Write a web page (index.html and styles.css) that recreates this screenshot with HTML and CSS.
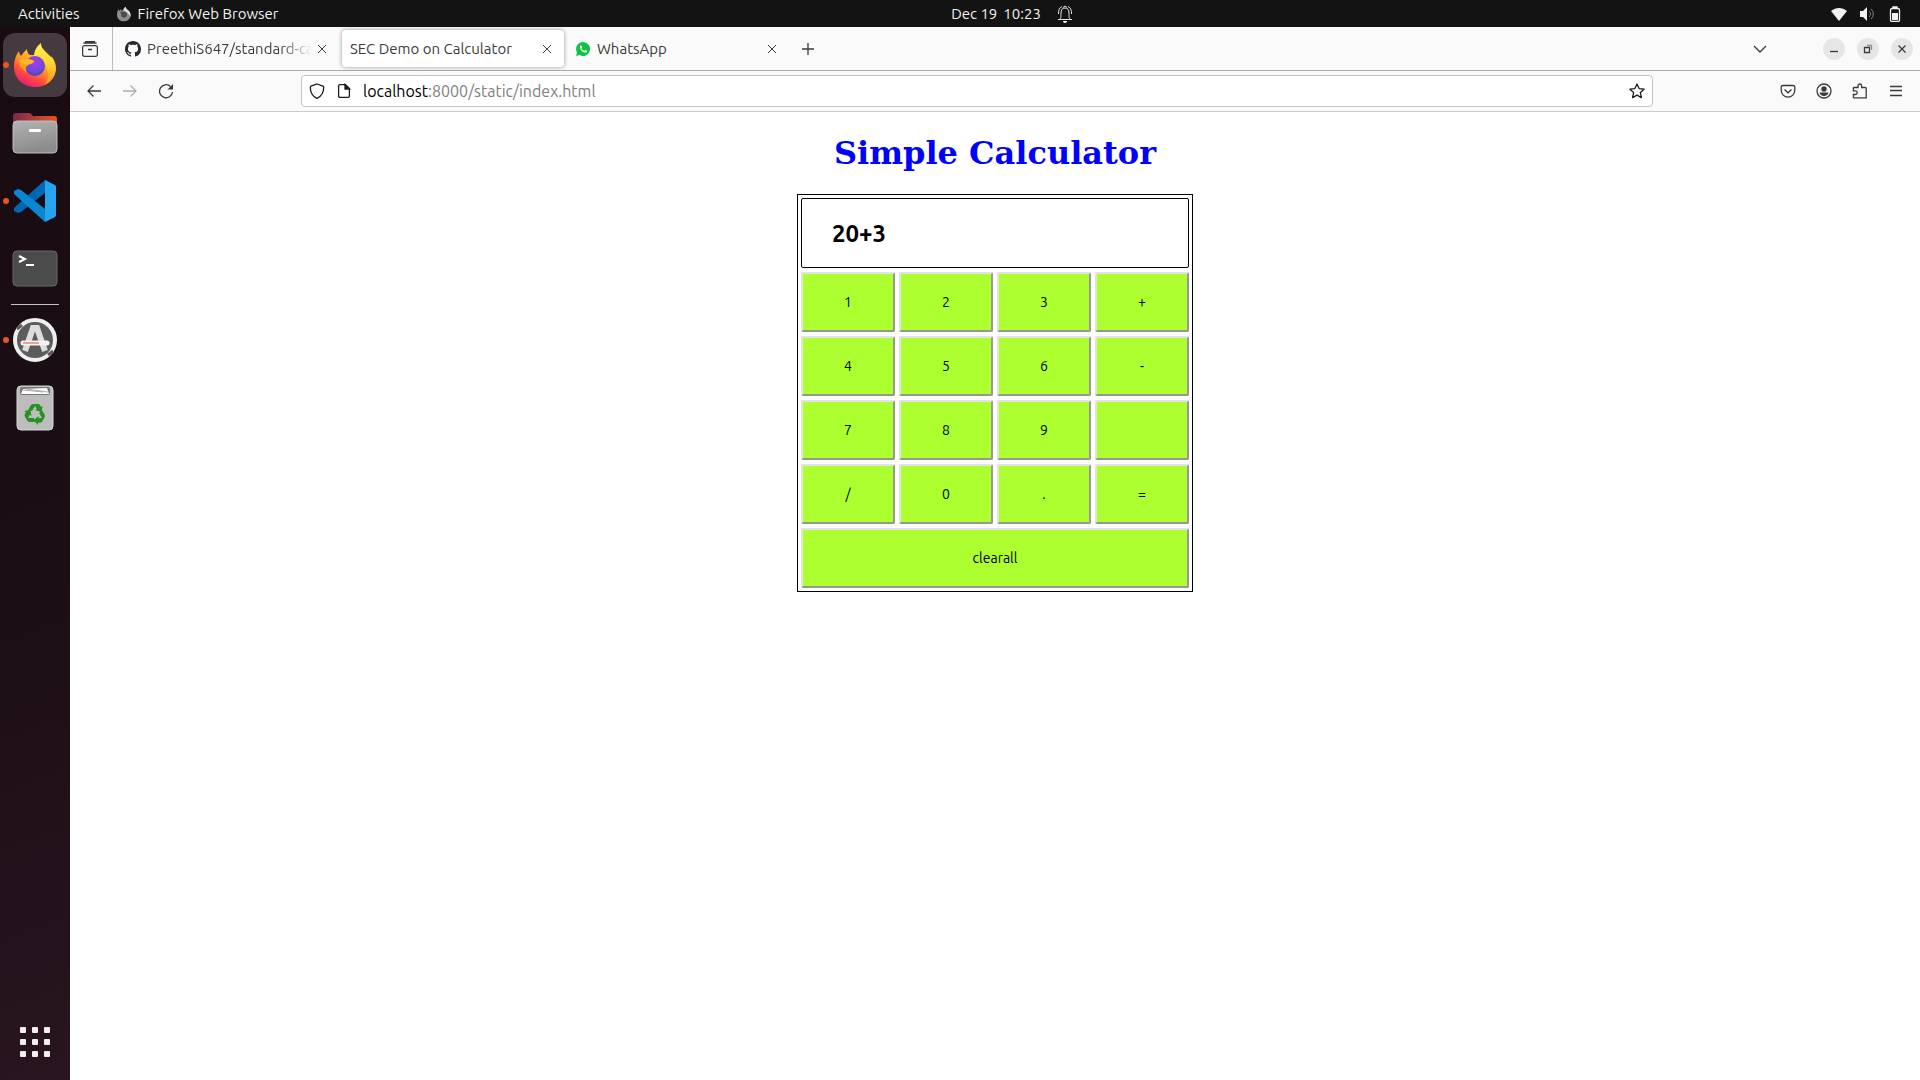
FILE: index.html
```html
<!DOCTYPE html>
<html lang="en">
<head>
<meta charset="utf-8">
<title>SEC Demo on Calculator</title>
<meta name="viewport" content="width=device-width, initial-scale=1">
<link rel="stylesheet" href="styles.css">
</head>
<body>
<div class="desktop">
  <header class="topbar">
    <div class="topbar-left">
      <button class="plain" type="button">Activities</button>
      <button class="plain app-menu" type="button">
        <svg width="16" height="16" viewBox="0 0 48 48" aria-hidden="true">
          <path d="M8 9c0 3 1 4 2 6l5-6c0 3 1 5 3 7C20 9 26 4 28 2c2 5 4 7 10 12 5 5 7 12 5 19-3 8-10 13-19 13C11 46 3 38 3 26c0-7 2-12 5-17z" fill="#8d8d8d"/>
          <path d="M28 2c2 5 4 7 10 12 5 5 7 12 5 19-4-9-10-16-20-20 1-5 3-8 5-11z" fill="#e2e2e2"/>
          <path d="M12 19c7-2 14-3 20 2 3 7-1 14-8 14-6 0-10-5-8-11z" fill="#4b4b4b"/>
        </svg>
        <span>Firefox Web Browser</span>
      </button>
    </div>
    <button class="plain clock" type="button">
      <span>Dec 19</span><span>10:23</span>
      <svg class="bell" width="16" height="18" viewBox="0 0 16 18" fill="none" stroke="#e6e6e6" aria-hidden="true">
        <path d="M3 14c1-1 1-2 1-6 0-3 1-5 4-5s4 2 4 5c0 4 0 5 1 6M1 14.500h14M1.500 9C1.500 5 2 3 5 1.500M14.500 9C14.500 5 14 3 11 1.500M6 2.500l2-1.500 2 1.500"/>
        <path d="M6 16h4c0 1-1 2-2 2s-2-1-2-2z" fill="#fff" stroke="none"/>
      </svg>
    </button>
    <div class="tray">
      <svg width="16" height="16" viewBox="0 0 16 16" aria-label="Wi-Fi"><path d="M0 5c5-4 11-4 16 0L8 15z" fill="#f2f2f2"/></svg>
      <svg width="16" height="16" viewBox="0 0 16 16" aria-label="Volume"><path d="M1 5h3l4-4v14l-4-4H1z" fill="#f2f2f2"/><path d="M10 5c2 2 2 4 0 6M12 3c3 3 3 7 0 10" fill="none" stroke="#888"/></svg>
      <svg width="16" height="16" viewBox="0 0 16 16" aria-label="Battery"><path d="M6 2V1h4v1M5 2.500h6q1.500 0 1.500 1.500v10q0 1.500-1.500 1.500H5q-1.500 0-1.500-1.500V4q0-1.500 1.500-1.500z" fill="none" stroke="#f2f2f2" stroke-width="1.300"/><path d="M5 7h6v7H5z" fill="#f2f2f2"/></svg>
    </div>
  </header>

  <nav class="dock" aria-label="Applications">
    <button class="dock-item active running" type="button" aria-label="Firefox">
      <svg width="44" height="46" viewBox="0 0 44 46" aria-hidden="true">
        <defs>
          <linearGradient id="fx1" x1="0.800" y1="0.100" x2="0.250" y2="1"><stop offset="0" stop-color="#ffe23c"/><stop offset="0.400" stop-color="#ffa01e"/><stop offset="0.700" stop-color="#ff4a3d"/><stop offset="1" stop-color="#e6138a"/></linearGradient>
          <linearGradient id="fx2" x1="0" y1="0" x2="0" y2="1"><stop offset="0" stop-color="#fff34f"/><stop offset="0.500" stop-color="#ffd433"/><stop offset="1" stop-color="#ff8a1c"/></linearGradient>
          <radialGradient id="fx3" cx="0.500" cy="0.300" r="0.800"><stop offset="0" stop-color="#a33cf0"/><stop offset="0.600" stop-color="#6a4bdc"/><stop offset="1" stop-color="#4a35b0"/></radialGradient>
        </defs>
        <path d="M6 9c0 2 1 4 2 5 2-3 4-5 6-7 0 3 1 5 3 6h12l10 2c3 4 4 8 4 11 0 11-9 19-21 19S1 36 1 25c0-7 2-12 5-16z" fill="url(#fx1)"/>
        <path d="M28 1c0 5 3 7 8 12 7 7 9 16 3 24-2 3-5 5-8 6 4-4 5-10 3-17-2-6-6-10-13-12 0-5 3-10 7-13z" fill="url(#fx2)"/>
        <circle cx="22" cy="24" r="10" fill="url(#fx3)"/>
        <path d="M6 18c5-1 10-2 15 1 0 3-5 3-7 5-2 1-1 5 0 7-4-3-8-7-8-13z" fill="#ff9a20"/>
        <path d="M6 18c5-1 10-2 15 1 0 3-4 2-7 4-3-1-6-2-8-5z" fill="#ffb629"/>
      </svg>
    </button>
    <button class="dock-item" type="button" aria-label="Files">
      <svg width="46" height="42" viewBox="0 0 46 42" aria-hidden="true">
        <defs>
          <linearGradient id="fo1"><stop offset="0" stop-color="#77284f"/><stop offset="1" stop-color="#e95420"/></linearGradient>
          <linearGradient id="fo2" x1="0" y1="0" x2="0.300" y2="1"><stop offset="0" stop-color="#b3b3b3"/><stop offset="1" stop-color="#8b8b8b"/></linearGradient>
        </defs>
        <path d="M1 12V4q0-3 3-3h13q2 0 3 2t3 1h19q3 0 3 3v8H1z" fill="url(#fo1)"/>
        <rect x="1" y="9" width="44" height="32" rx="4" fill="url(#fo2)" stroke="#bdbdbd"/>
        <rect x="17" y="17" width="12" height="3" rx="1" fill="#fff"/>
      </svg>
    </button>
    <button class="dock-item running" type="button" aria-label="Visual Studio Code">
      <svg width="44" height="44" viewBox="0 0 44 44" aria-hidden="true">
        <path d="M32 1L1 29v3l4 2 3-1 24-19z" fill="#0067b4"/>
        <path d="M32 43L1 15v-3l4-2 3 1 24 19z" fill="#0b86d2"/>
        <path d="M32 1l10 5q1 1 1 2v28q0 1-1 2l-10 5V1z" fill="#28a4ef"/>
      </svg>
    </button>
    <button class="dock-item" type="button" aria-label="Terminal">
      <svg width="46" height="38" viewBox="0 0 46 38" fill="none" aria-hidden="true">
        <rect x="1" y="1" width="44" height="35" rx="4" fill="#4b4b4b" stroke="#686868"/>
        <path d="M7 6l6 3-6 3" stroke="#fff" stroke-width="2"/><path d="M14 15h8" stroke="#fff" stroke-width="2"/>
      </svg>
    </button>
    <hr class="dock-rule">
    <button class="dock-item running" type="button" aria-label="Software Updater">
      <svg width="46" height="46" viewBox="0 0 46 46" fill="none" aria-hidden="true">
        <circle cx="23" cy="23" r="20" fill="#5c5c5c" stroke="#efefef" stroke-width="4"/>
        <path d="M5 12l5-4M36 38l5-4" stroke="#5c5c5c" stroke-width="3"/>
        <path d="M13 34l8-23h4l8 23" stroke="#dedede" stroke-width="6"/>
        <path d="M11 26h24" stroke="#f3f3f3" stroke-width="5" stroke-linecap="round"/>
        <path d="M11 26h16" stroke="#e95420"/>
      </svg>
    </button>
    <button class="dock-item" type="button" aria-label="Trash">
      <svg width="38" height="46" viewBox="0 0 38 46" fill="none" aria-hidden="true">
        <rect x="1" y="1" width="36" height="44" rx="4" fill="#bdbdbd" stroke="#d6d6d6"/>
        <rect x="4" y="2" width="30" height="8" rx="2" fill="#777"/>
        <path d="M5 9l2-5 24-1 2 6z" fill="#fff"/><path d="M7 5l20 2M10 4l22 3" stroke="#aaa"/>
        <g id="arrow" fill="#26921f"><path d="M12 25l3-5q1-1 2-1h5q1 0 2 1l1 2 2-1-2 6-6-2 2-1-2-3-3 5z"/></g>
        <g fill="#26921f" transform="rotate(120 19 29)"><path d="M12 25l3-5q1-1 2-1h5q1 0 2 1l1 2 2-1-2 6-6-2 2-1-2-3-3 5z"/></g>
        <g fill="#26921f" transform="rotate(240 19 29)"><path d="M12 25l3-5q1-1 2-1h5q1 0 2 1l1 2 2-1-2 6-6-2 2-1-2-3-3 5z"/></g>
      </svg>
    </button>
    <button class="dock-item apps" type="button" aria-label="Show Applications">
      <svg width="30" height="30" viewBox="0 0 30 30" fill="#f2f0ee" aria-hidden="true">
        <rect width="6" height="6" rx="1"/><rect x="12" width="6" height="6" rx="1"/><rect x="24" width="6" height="6" rx="1"/>
        <rect y="12" width="6" height="6" rx="1"/><rect x="12" y="12" width="6" height="6" rx="1"/><rect x="24" y="12" width="6" height="6" rx="1"/>
        <rect y="24" width="6" height="6" rx="1"/><rect x="12" y="24" width="6" height="6" rx="1"/><rect x="24" y="24" width="6" height="6" rx="1"/>
      </svg>
    </button>
  </nav>

  <div class="browser">
    <div class="tabstrip">
      <button class="icon-btn view-btn" type="button" aria-label="Firefox View">
        <svg width="16" height="16" viewBox="0 0 16 16"><rect x="0.600" y="4.600" width="14.800" height="10.800" rx="2"/><path d="M1.500 2.500q0-.5 1-.5h11q1 0 1 .5M3 .5h10M6 8.500h4"/></svg>
      </button>
      <div class="tabs">
        <div class="tab">
          <svg class="favicon" width="16" height="16" viewBox="0 0 16 16" aria-hidden="true"><path fill="#24292f" d="M8 0C3.580 0 0 3.580 0 8c0 3.540 2.290 6.530 5.470 7.590.4.070.55-.17.55-.38 0-.19-.01-.82-.01-1.490-2.010.37-2.530-.49-2.690-.94-.09-.23-.48-.94-.82-1.130-.28-.15-.68-.52-.01-.53.63-.01 1.080.58 1.230.82.72 1.210 1.870.87 2.330.66.070-.52.28-.87.51-1.070-1.780-.2-3.640-.89-3.640-3.950 0-.87.31-1.590.82-2.150-.08-.2-.36-1.020.08-2.120 0 0 .67-.21 2.200.82.64-.18 1.320-.27 2-.27s1.360.09 2 .27c1.530-1.040 2.200-.82 2.200-.82.44 1.100.16 1.920.08 2.120.51.56.82 1.270.82 2.150 0 3.070-1.870 3.750-3.650 3.950.29.25.54.73.54 1.480 0 1.070-.01 1.930-.01 2.200 0 .21.15.46.55.38A8.010 8.010 0 0 0 16 8c0-4.420-3.580-8-8-8z"/></svg>
          <span class="tab-title fade">PreethiS647/standard-cal</span>
          <button class="icon-btn tab-close" type="button" aria-label="Close tab"><svg width="10" height="10" viewBox="0 0 10 10"><path d="M1 1l8 8M9 1l-8 8"/></svg></button>
        </div>
        <div class="tab selected">
          <span class="tab-title">SEC Demo on Calculator</span>
          <button class="icon-btn tab-close" type="button" aria-label="Close tab"><svg width="10" height="10" viewBox="0 0 10 10"><path d="M1 1l8 8M9 1l-8 8"/></svg></button>
        </div>
        <div class="tab">
          <svg class="favicon" width="16" height="16" viewBox="0 0 16 16" aria-hidden="true"><path d="M8 1a7 7 0 1 1-3.500 13L1 15l1-3.500A7 7 0 0 1 8 1z" fill="#12c244"/><path d="M5.500 4.500c-2 1.500 1.500 7.500 5.500 7 1 0 1.500-1 1.200-1.800L10.300 9l-1 1C8 9.500 7 8.500 6.300 7.200l.8-.9-.7-1.800z" fill="#fff"/></svg>
          <span class="tab-title">WhatsApp</span>
          <button class="icon-btn tab-close" type="button" aria-label="Close tab"><svg width="10" height="10" viewBox="0 0 10 10"><path d="M1 1l8 8M9 1l-8 8"/></svg></button>
        </div>
        <button class="icon-btn new-tab" type="button" aria-label="New tab"><svg width="12" height="12" viewBox="0 0 12 12"><path d="M6 0v12M0 6h12"/></svg></button>
      </div>
      <button class="icon-btn list-tabs" type="button" aria-label="List all tabs"><svg width="14" height="8" viewBox="0 0 14 8"><path d="M1 1l6 6 6-6"/></svg></button>
      <div class="window-controls">
        <button class="win-btn" type="button" aria-label="Minimize"><svg width="10" height="10" viewBox="0 0 10 10"><path d="M1 7.500h8"/></svg></button>
        <button class="win-btn" type="button" aria-label="Restore"><svg width="10" height="10" viewBox="0 0 10 10"><path d="M1.500 3.500h5v5h-5z"/><path d="M4 1.500h4.500V6" opacity="0.500"/></svg></button>
        <button class="win-btn" type="button" aria-label="Close"><svg width="10" height="10" viewBox="0 0 10 10"><path d="M1.500 1.500l7 7M8.500 1.500l-7 7"/></svg></button>
      </div>
    </div>

    <div class="navbar">
      <button class="icon-btn nav-btn" type="button" aria-label="Back"><svg width="16" height="16" viewBox="0 0 16 16"><path d="M15 8H2M7.500 2.500L2 8l5.500 5.500"/></svg></button>
      <button class="icon-btn nav-btn" type="button" aria-label="Forward" disabled><svg width="16" height="16" viewBox="0 0 16 16"><path d="M1 8h13M8.500 2.500L14 8l-5.500 5.500"/></svg></button>
      <button class="icon-btn nav-btn" type="button" aria-label="Reload"><svg width="16" height="16" viewBox="0 0 16 16"><path d="M14.500 9A6.500 6.500 0 1 1 12.500 3.500"/><path d="M15 1v5.500H9.500z" fill="#3b3b3d" stroke="none"/></svg></button>
      <div class="spring"></div>
      <div class="urlbar">
        <svg width="16" height="16" viewBox="0 0 16 16" aria-hidden="true"><path d="M8 1l6 2.200q.7.300.7 1C14.700 10 12 13.500 8 15.300 4 13.500 1.300 10 1.300 4.200q0-.7.700-1z"/></svg>
        <svg width="16" height="16" viewBox="0 0 16 16" aria-hidden="true"><path d="M4 1.600h5.500L13.400 5.500V13q0 1.400-1.400 1.400H4q-1.400 0-1.400-1.400V3Q2.600 1.600 4 1.600z"/><path d="M9 1.500V6h4.500z" fill="#1c1c1e"/></svg>
        <a class="url" href="#"><span class="host">localhost</span>:8000/static/index.html</a>
        <button class="icon-btn star" type="button" aria-label="Bookmark this page"><svg width="16" height="16" viewBox="0 0 16 16"><path d="M8 1l2.100 4.600 5 .6-3.700 3.400 1 5L8 12.100l-4.400 2.500 1-5L.9 6.200l5-.6z" stroke-linejoin="round"/></svg></button>
      </div>
      <div class="spring"></div>
      <button class="icon-btn nav-btn" type="button" aria-label="Save to Pocket"><svg width="16" height="16" viewBox="0 0 16 16"><path d="M3 2.500h10q1.800 0 1.800 1.800v3a6.800 6.800 0 0 1-13.600 0v-3Q1.200 2.500 3 2.500zM4.500 6.500L8 9.800l3.500-3.300"/></svg></button>
      <button class="icon-btn nav-btn" type="button" aria-label="Account"><svg width="16" height="16" viewBox="0 0 16 16"><circle cx="8" cy="8" r="7"/><circle cx="8" cy="6" r="2.700" fill="#3b3b3d" stroke="none"/><path d="M3.500 9.500h9c-.5 2-2 3.500-4.500 3.500S4 11.500 3.500 9.500z" fill="#3b3b3d" stroke="none"/></svg></button>
      <button class="icon-btn nav-btn" type="button" aria-label="Extensions"><svg width="16" height="16" viewBox="0 0 16 16"><path d="M2 4.500h4V2.800a1.800 1.800 0 0 1 3.600 0v1.700h3.600q1 0 1 1v9.300H2q-.6 0-.6-.6v-2.700h2a1.800 1.800 0 0 0 0-3.600h-2V5q0-.5.6-.5z"/></svg></button>
      <button class="icon-btn nav-btn" type="button" aria-label="Menu"><svg width="14" height="12" viewBox="0 0 14 12"><path d="M1 1.500h12M1 5.500h12M1 10.500h12"/></svg></button>
    </div>

    <main class="page">
      <h1>Simple Calculator</h1>
      <form class="calculator">
        <input class="display" type="text" value="20+3" aria-label="Expression" readonly>
        <button class="key" type="button">1</button>
        <button class="key" type="button">2</button>
        <button class="key" type="button">3</button>
        <button class="key" type="button">+</button>
        <button class="key" type="button">4</button>
        <button class="key" type="button">5</button>
        <button class="key" type="button">6</button>
        <button class="key" type="button">-</button>
        <button class="key" type="button">7</button>
        <button class="key" type="button">8</button>
        <button class="key" type="button">9</button>
        <button class="key" type="button" aria-label="Multiply"></button>
        <button class="key" type="button">/</button>
        <button class="key" type="button">0</button>
        <button class="key" type="button">.</button>
        <button class="key" type="button">=</button>
        <button class="key wide" type="button">clearall</button>
      </form>
    </main>
  </div>
</div>
</body>
</html>
```
FILE: styles.css
```css
* { box-sizing: border-box; }

body {
  margin: 0;
  font: 15px/20px Ubuntu, "Noto Sans", sans-serif;
  background: #fff;
}

button, input { font: inherit; color: inherit; }
button { margin: 0; padding: 0; }
svg { display: block; flex: none; }

.desktop {
  display: grid;
  grid-template: auto 1fr / 70px minmax(0, 1fr);
  min-height: 100vh;
}

/* System bar */
.topbar {
  grid-column: 1 / -1;
  display: grid;
  grid-template-columns: 1fr auto 1fr;
  align-items: center;
  height: 27px;
  background: #131313;
  color: #f2f2f2;
}
.plain { display: flex; align-items: center; border: 0; background: none; }
.topbar-left { display: flex; gap: 36px; padding-left: 18px; }
.app-menu { gap: 6px; }
.clock { gap: 6px; padding-left: 104px; }
.bell { margin-left: 10px; }
.tray { display: flex; justify-content: flex-end; gap: 12px; padding-right: 17px; }

/* Dock */
.dock {
  display: flex;
  flex-direction: column;
  align-items: center;
  gap: 4px;
  padding: 6px 0;
  background: linear-gradient(160deg, #180b12, #1b0e15 50%, #28151f);
}
.dock-item {
  position: relative;
  display: flex;
  align-items: center;
  justify-content: center;
  width: 64px;
  height: 64px;
  border: 0;
  border-radius: 12px;
  background: none;
}
.dock-item.active { background: #443a40; }
.dock-item.running::before {
  content: "";
  position: absolute;
  left: 0;
  top: 29px;
  width: 6px;
  height: 6px;
  border-radius: 50%;
  background: #e95420;
}
.dock-rule { width: 48px; height: 1px; margin: -1px 0; border: 0; background: #c9c5c7; }
.apps { margin-top: auto; }

/* Browser chrome */
.browser { display: flex; flex-direction: column; background: #fff; }
.icon-btn {
  display: flex;
  flex: none;
  align-items: center;
  justify-content: center;
  border: 0;
  background: none;
}
.icon-btn svg, .win-btn svg { fill: none; stroke: #3b3b3d; stroke-width: 1.3; }
.tab-close svg { stroke-width: 1; }

.tabstrip {
  display: flex;
  align-items: center;
  height: 44px;
  padding-right: 7px;
  background: #fafafa;
  border-bottom: 1px solid #aaa;
  color: #3b3b3d;
}
.view-btn { width: 43px; height: 43px; padding-right: 3px; border-right: 1px solid #bbb; }
.tabs { display: flex; flex: 1; min-width: 0; align-items: center; gap: 3px; padding-left: 4px; }
.tab {
  display: flex;
  align-items: center;
  width: 222px;
  height: 37px;
  padding: 0 7px 0 8px;
  border-radius: 4px;
}
.tab.selected { background: #fff; box-shadow: 0 0 4px rgba(0, 0, 0, 0.4); }
.favicon { margin-right: 6px; }
.tab-title { flex: 1; min-width: 0; overflow: hidden; white-space: nowrap; }
.fade {
  -webkit-mask-image: linear-gradient(to left, transparent, #000 32px);
  mask-image: linear-gradient(to left, transparent, #000 32px);
}
.tab-close { width: 20px; height: 24px; }
.new-tab { width: 32px; height: 32px; }
.list-tabs { width: 32px; height: 32px; }
.window-controls { display: flex; gap: 12px; margin-left: 47px; }
.win-btn {
  display: flex;
  align-items: center;
  justify-content: center;
  width: 22px;
  height: 22px;
  border: 0;
  border-radius: 50%;
  background: #e6e6e6;
}

.navbar {
  display: flex;
  align-items: center;
  height: 41px;
  padding: 0 6px;
  background: #fafafa;
  border-bottom: 1px solid #ccc;
}
.nav-btn { width: 36px; height: 32px; }
.nav-btn:disabled { opacity: 0.4; }
.spring { flex: 0 1 117px; }
.urlbar {
  display: flex;
  flex: 1;
  align-items: center;
  gap: 11px;
  height: 32px;
  padding: 0 7px;
  border: 1px solid #c4c4c4;
  border-radius: 4px;
  background: #fff;
}
.urlbar svg { fill: none; stroke: #1c1c1e; stroke-width: 1.3; }
.url { flex: 1; color: #808080; font-size: 16px; text-decoration: none; white-space: nowrap; }
.host { color: #000; }

/* Calculator page */
.page { display: flex; flex: 1; flex-direction: column; align-items: center; padding: 21px 8px; }
h1 {
  margin: 0 0 21px;
  font: bold 32px/40px "DejaVu Serif", serif;
  color: blue;
}
.calculator {
  display: grid;
  grid-template-columns: repeat(4, 94px);
  grid-template-rows: 70px;
  grid-auto-rows: 60px;
  gap: 4px;
  padding: 3px;
  border: 1px solid #000;
}
.display {
  grid-column: 1 / -1;
  min-width: 0;
  padding: 0 30px;
  border: 1px solid #000;
  border-radius: 2px;
  outline: 0;
  background: #fff;
  font-size: 24px;
  font-weight: bold;
}
.key {
  border: 2px solid;
  border-color: #e3e3e3 #979797 #979797 #e3e3e3;
  border-radius: 2px;
  background: greenyellow;
  color: #000;
  font-size: 14px;
}
.wide { grid-column: 1 / -1; }
```
